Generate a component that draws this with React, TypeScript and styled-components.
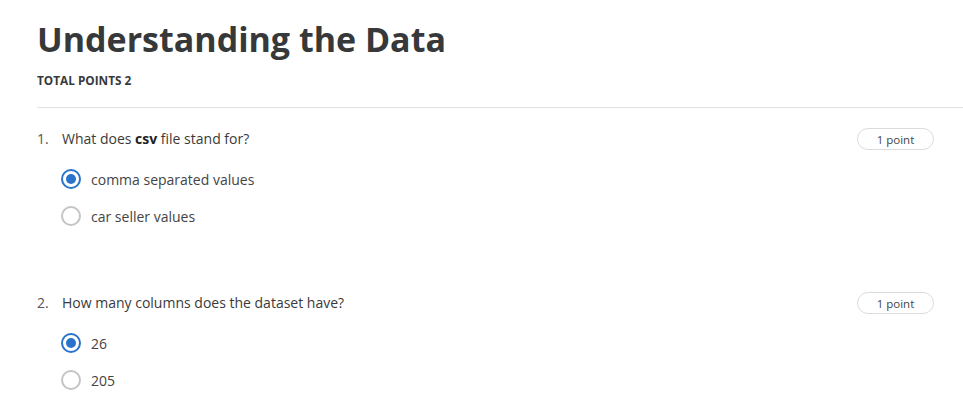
import React from "react";
import styled, { createGlobalStyle } from "styled-components";

const Global = createGlobalStyle`
  html, body { margin: 0; padding: 0; background: #fff; }
  body { font-family: "Open Sans", "Liberation Sans", sans-serif; color: #333; }
`;

const Page = styled.div`
  padding: 17px 0 0 37px;
`;

const Title = styled.h1`
  margin: 0;
  font-size: 34px;
  line-height: 45px;
  font-weight: 700;
  color: #363839;
`;

const TotalPoints = styled.div`
  margin-top: 11px;
  font-size: 11.8px;
  line-height: 15px;
  font-weight: 700;
  color: #373a3c;
`;

const Divider = styled.hr`
  margin: 19px 0 0 0;
  border: 0;
  border-top: 1px solid #e1e1e1;
`;

const Question = styled.section<{ $first?: boolean }>`
  padding-top: ${(p) => (p.$first ? 19 : 65)}px;
  padding-right: 29px;
`;

const QuestionRow = styled.div`
  display: flex;
  align-items: center;
  height: 22px;
`;

const Num = styled.span`
  width: 25px;
  font-size: 14px;
  color: #555;
`;

const QText = styled.span`
  flex: 1;
  font-size: 14px;
  color: #3a3a3a;
  b { font-weight: 700; color: #222; }
`;

const Pill = styled.span`
  margin-top: 2px;
  width: 75px;
  height: 20px;
  border: 1px solid #dcdcdc;
  border-radius: 11px;
  display: flex;
  align-items: center;
  justify-content: center;
  font-size: 11.5px;
  color: #444;
`;

const Options = styled.div`
  padding-left: 24px;
  margin-top: 20px;
  display: flex;
  flex-direction: column;
  gap: 17px;
`;

const Option = styled.label`
  display: flex;
  align-items: center;
  gap: 10px;
  height: 20px;
  font-size: 14px;
  color: #444;
`;

const Radio = styled.span<{ $checked?: boolean }>`
  box-sizing: border-box;
  width: 20px;
  height: 20px;
  border-radius: 50%;
  border: 2px solid ${(p) => (p.$checked ? "#2a73cc" : "#c4c4c4")};
  display: flex;
  align-items: center;
  justify-content: center;
  &::after {
    content: "";
    display: ${(p) => (p.$checked ? "block" : "none")};
    width: 10px;
    height: 10px;
    border-radius: 50%;
    background: #2a73cc;
  }
`;

type Q = { n: number; text: React.ReactNode; options: string[]; checked: number };

const questions: Q[] = [
  {
    n: 1,
    text: (
      <>
        What does <b>csv</b> file stand for?
      </>
    ),
    options: ["comma separated values", "car seller values"],
    checked: 0,
  },
  {
    n: 2,
    text: "How many columns does the dataset have?",
    options: ["26", "205"],
    checked: 0,
  },
];

export default function App() {
  return (
    <>
      <Global />
      <Page>
        <Title>Understanding the Data</Title>
        <TotalPoints>TOTAL POINTS 2</TotalPoints>
        <Divider />
        {questions.map((q, i) => (
          <Question key={q.n} $first={i === 0}>
            <QuestionRow>
              <Num>{q.n}.</Num>
              <QText>{q.text}</QText>
              <Pill>1 point</Pill>
            </QuestionRow>
            <Options>
              {q.options.map((o, j) => (
                <Option key={o}>
                  <Radio $checked={j === q.checked} />
                  {o}
                </Option>
              ))}
            </Options>
          </Question>
        ))}
      </Page>
    </>
  );
}
